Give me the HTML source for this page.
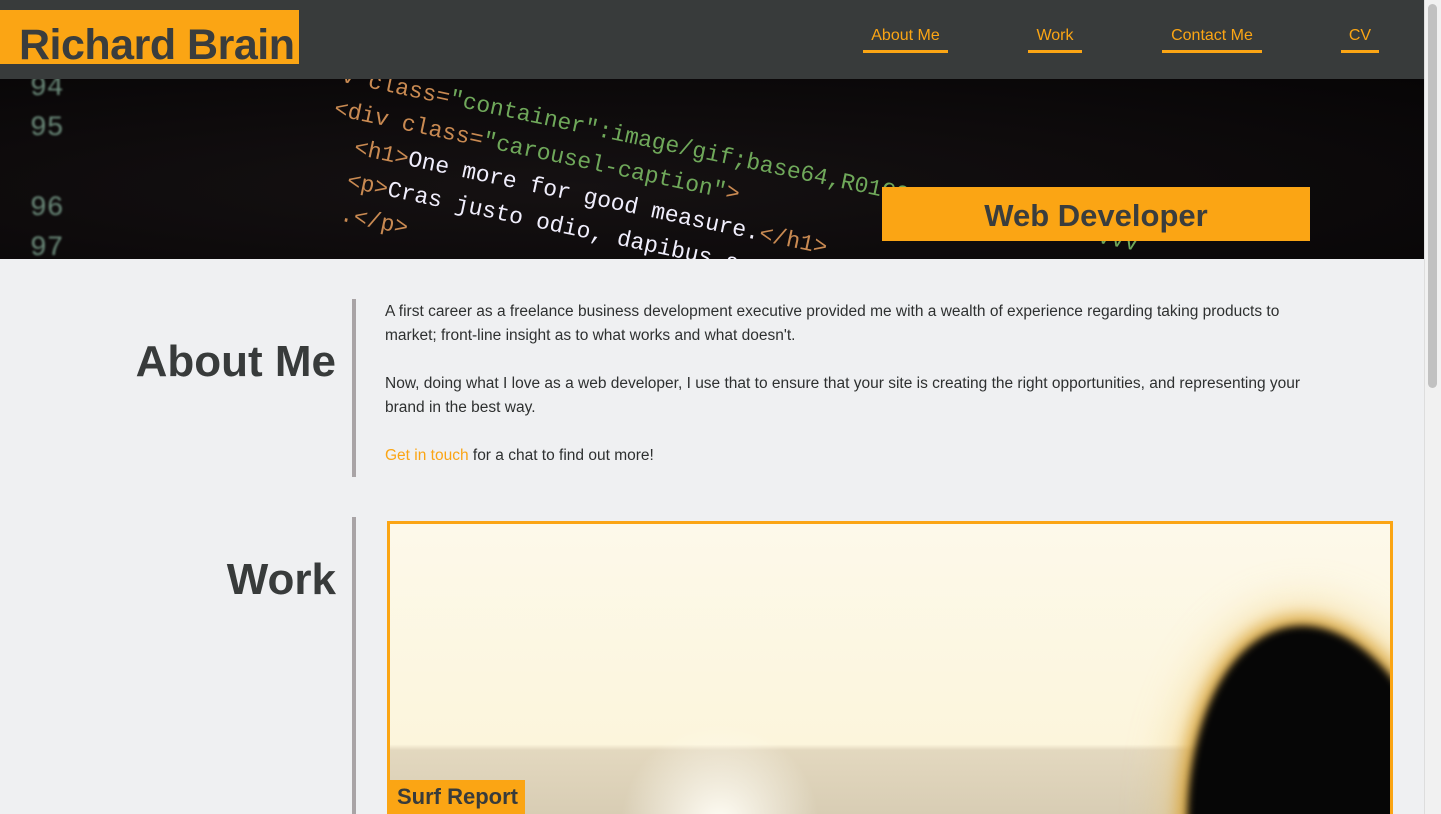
<!DOCTYPE html>
<html><head><meta charset="utf-8"><style>
*{margin:0;padding:0;box-sizing:border-box}
html,body{width:1441px;height:814px;overflow:hidden}
body{background:#eff0f2;font-family:"Liberation Sans",sans-serif;color:#383b3b;position:relative}
.hdr{position:absolute;left:0;top:0;width:1424px;height:79px;background:#383b3b}
.logo{position:absolute;left:0;top:10px;width:299px;height:54px;background:#fba514;font-size:43px;font-weight:bold;line-height:70px;padding-left:19px;color:#3a3d3d;overflow:hidden;letter-spacing:-0.5px}
.nav a{position:absolute;top:27px;color:#fba514;font-size:16px;text-decoration:none;border-bottom:3px solid #fba514;padding:0 6px 5px;text-align:center}
.hero{position:absolute;left:0;top:79px;width:1424px;height:180px;background:radial-gradient(ellipse at 40% 60%,#151112,#070506);overflow:hidden}
.code{position:absolute;font-family:"Liberation Mono",monospace;font-size:23px;white-space:pre;transform-origin:left top;transform:rotate(12deg)}
.wd{position:absolute;left:882px;top:108px;width:428px;height:54px;background:#fba514;font-size:31px;font-weight:bold;text-align:center;line-height:58px;color:#3a3d3d}
h2{position:absolute;right:1105px;font-size:44px;font-weight:bold;color:#383b3b}
.vl{position:absolute;left:352px;width:4px;background:#a9a4a6}
.p{position:absolute;left:385px;width:945px;font-size:15.5px;line-height:24px;color:#2e3030}
.p a{color:#fba514;text-decoration:none}
.img{position:absolute;left:387px;top:521px;width:1006px;height:293px;border:3px solid #fba514;border-bottom:none;background:linear-gradient(180deg,#fdf9ea 0%,#fcf5dc 76%,#e3d8bf 78%,#d8cdb4 100%);overflow:hidden}
.sr{position:absolute;left:0;top:256px;background:#fba514;font-size:22px;font-weight:bold;padding:4px 7px;color:#383b3b}
.sb{position:absolute;left:1424px;top:0;width:17px;height:814px;background:#f1f1f1;border-left:1px solid #ddd}
.th{position:absolute;left:1428px;top:4px;width:9px;height:384px;background:#c1c1c1;border-radius:5px}
</style></head><body>
<div class="hdr">
<div class="logo">Richard Brain</div>
<div class="nav">
<a style="left:863px;width:85px">About Me</a>
<a style="left:1028px;width:54px">Work</a>
<a style="left:1162px;width:100px">Contact Me</a>
<a style="left:1341px;width:38px">CV</a>
</div></div>
<div class="hero">
<div class="code" style="left:30px;top:-10px;color:#6b8a7a;transform:none;font-size:28px;line-height:40px;filter:blur(1px)">94
95

96
97</div>
<div class="code" style="left:345px;top:-20px;line-height:34px"><span style="color:#c98a52">v class=</span><span style="color:#6fa85a">"container"</span><span style="color:#6fa85a">:image/gif;base64,R01GOD1hAQABAIAAAFVVVV</span>
<span style="color:#c98a52">&lt;div class=</span><span style="color:#6fa85a">"carousel-caption"</span><span style="color:#c98a52">&gt;</span>
<span style="color:#c98a52">  &lt;h1&gt;</span><span style="color:#f0eefc">One more for good measure.</span><span style="color:#c98a52">&lt;/h1&gt;</span>
<span style="color:#c98a52">  &lt;p&gt;</span><span style="color:#f0eefc">Cras justo odio, dapibus ac facilisis</span>
<span style="color:#c98a52">  .&lt;/p&gt;</span></div>
<div class="wd">Web Developer</div>
</div>
<h2 style="top:337px">About Me</h2>
<div class="vl" style="top:299px;height:178px"></div>
<div class="p" style="top:300px">A first career as a freelance business development executive provided me with a wealth of experience regarding taking products to market; front-line insight as to what works and what doesn't.<br><br>Now, doing what I love as a web developer, I use that to ensure that your site is creating the right opportunities, and representing your brand in the best way.<br><br><a>Get in touch</a> for a chat to find out more!</div>
<h2 style="top:555px">Work</h2>
<div class="vl" style="top:517px;height:297px"></div>
<div class="img">
<div style="position:absolute;left:230px;top:200px;width:200px;height:100px;background:radial-gradient(ellipse at 50% 100%,#fffdf5,rgba(255,255,255,0) 70%)"></div>
<div style="position:absolute;left:800px;top:100px;width:270px;height:480px;border-radius:50% 50% 45% 45%;background:#060606;filter:blur(4px);box-shadow:0 0 14px 10px rgba(214,160,50,0.85),0 0 40px 25px rgba(240,200,110,0.4);transform:rotate(-8deg)"></div>
<div class="sr">Surf Report</div>
</div>
<div class="sb"></div><div class="th"></div>
</body></html>
